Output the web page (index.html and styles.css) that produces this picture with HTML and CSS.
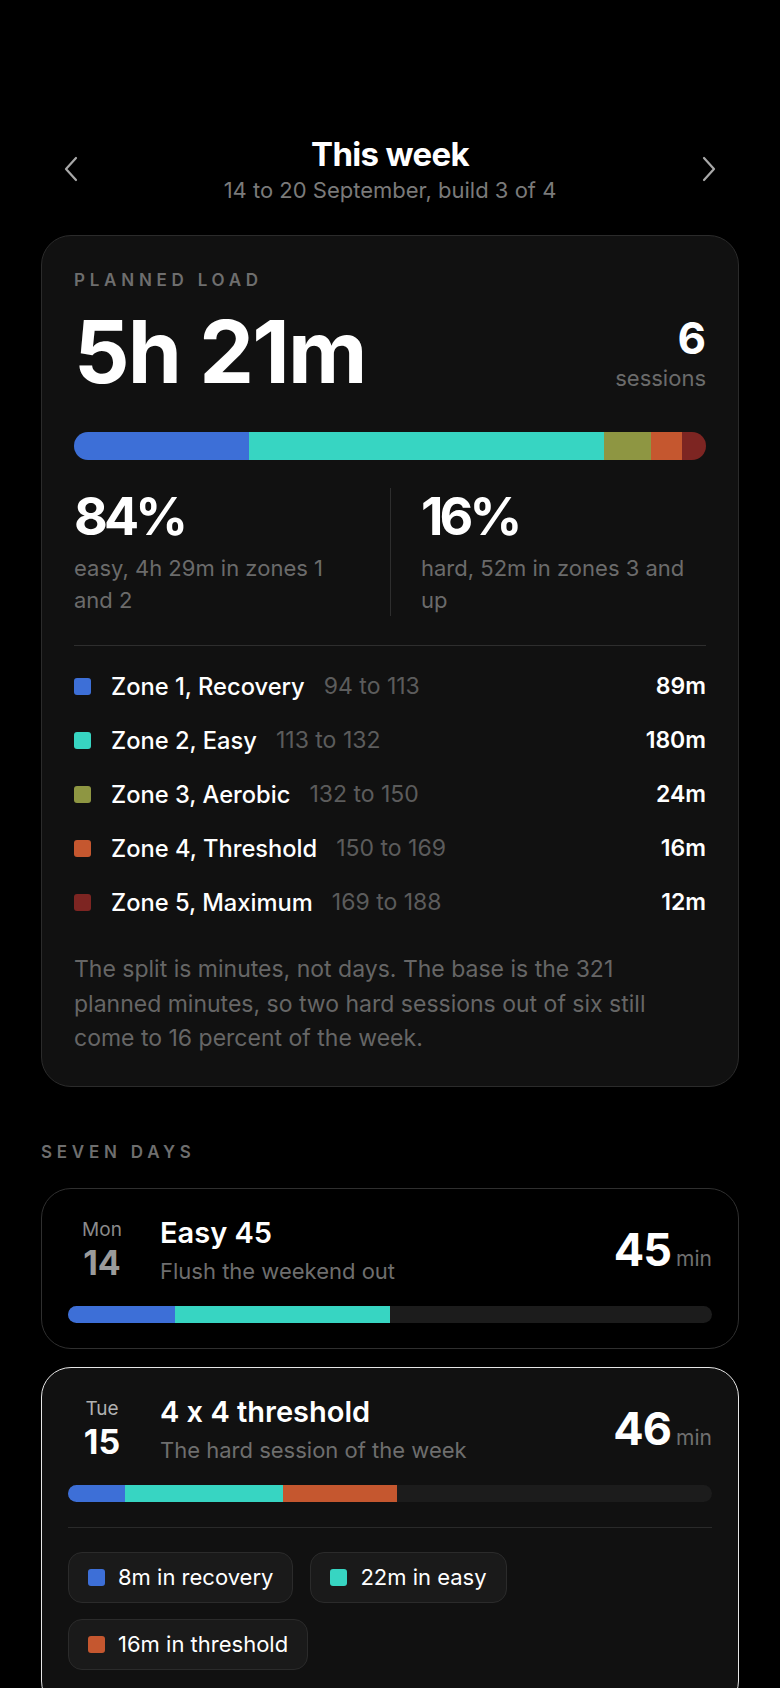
FILE: index.html
```html
<!DOCTYPE html>
<html lang="en">
<head>
    <meta charset="utf-8">
    <title>This week</title>
    <meta name="viewport" content="width=device-width, initial-scale=1">
    <link rel="stylesheet" href="styles.css">
</head>
<body>
    <main class="page">
        <header class="week-head">
            <button class="nav-btn" aria-label="Previous week">
                <svg width="14" height="26" viewBox="0 0 14 26"><polyline points="12,2 2,13 12,24"/></svg>
            </button>
            <div class="week-title">
                <h1>This week</h1>
                <p class="week-sub">14 to 20 September, build 3 of 4</p>
            </div>
            <button class="nav-btn" aria-label="Next week">
                <svg width="14" height="26" viewBox="0 0 14 26"><polyline points="2,2 12,13 2,24"/></svg>
            </button>
        </header>

        <section class="load-card">
            <div class="eyebrow">Planned load</div>
            <div class="total-row">
                <div class="total">5h 21m</div>
                <div class="sessions">
                    <span class="sessions-num">6</span>
                    <span class="sessions-label">sessions</span>
                </div>
            </div>
            <div class="zone-bar">
                <span class="seg z1" style="width:27.73%"></span>
                <span class="seg z2" style="width:56.07%"></span>
                <span class="seg z3" style="width:7.48%"></span>
                <span class="seg z4" style="width:4.98%"></span>
                <span class="seg z5" style="width:3.74%"></span>
            </div>
            <div class="split">
                <div class="split-col">
                    <div class="split-pct">84%</div>
                    <p class="split-desc">easy, 4h 29m in zones 1 and 2</p>
                </div>
                <div class="split-col hard">
                    <div class="split-pct">16%</div>
                    <p class="split-desc">hard, 52m in zones 3 and up</p>
                </div>
            </div>
            <ul class="zones">
                <li class="zone"><span class="swatch z1"></span><span class="zone-name">Zone 1, Recovery</span><span class="zone-range">94 to 113</span><span class="zone-min">89m</span></li>
                <li class="zone"><span class="swatch z2"></span><span class="zone-name">Zone 2, Easy</span><span class="zone-range">113 to 132</span><span class="zone-min">180m</span></li>
                <li class="zone"><span class="swatch z3"></span><span class="zone-name">Zone 3, Aerobic</span><span class="zone-range">132 to 150</span><span class="zone-min">24m</span></li>
                <li class="zone"><span class="swatch z4"></span><span class="zone-name">Zone 4, Threshold</span><span class="zone-range">150 to 169</span><span class="zone-min">16m</span></li>
                <li class="zone"><span class="swatch z5"></span><span class="zone-name">Zone 5, Maximum</span><span class="zone-range">169 to 188</span><span class="zone-min">12m</span></li>
            </ul>
            <p class="note">The split is minutes, not days. The base is the 321 planned minutes, so two hard sessions out of six still come to 16 percent of the week.</p>
        </section>

        <h2 class="eyebrow days-title">Seven days</h2>
        <div class="days">
            <article class="day past">
                <div class="day-top">
                    <div class="day-date"><span class="dow">Mon</span><span class="dom">14</span></div>
                    <div class="day-info">
                        <div class="day-name">Easy 45</div>
                        <div class="day-sub">Flush the weekend out</div>
                    </div>
                    <div class="dur"><span class="dur-num">45</span><span class="dur-unit">min</span></div>
                </div>
                <div class="day-bar">
                    <span class="seg z1" style="width:16.67%"></span>
                    <span class="seg z2" style="width:33.33%"></span>
                </div>
            </article>

            <article class="day open">
                <div class="day-top">
                    <div class="day-date"><span class="dow">Tue</span><span class="dom">15</span></div>
                    <div class="day-info">
                        <div class="day-name">4 x 4 threshold</div>
                        <div class="day-sub">The hard session of the week</div>
                    </div>
                    <div class="dur"><span class="dur-num">46</span><span class="dur-unit">min</span></div>
                </div>
                <div class="day-bar">
                    <span class="seg z1" style="width:8.89%"></span>
                    <span class="seg z2" style="width:24.44%"></span>
                    <span class="seg z4" style="width:17.78%"></span>
                </div>
                <div class="chips">
                    <span class="chip"><span class="swatch z1"></span>8m in recovery</span>
                    <span class="chip"><span class="swatch z2"></span>22m in easy</span>
                    <span class="chip"><span class="swatch z4"></span>16m in threshold</span>
                </div>
            </article>
        </div>
    </main>
</body>
</html>
```

FILE: styles.css
```css
body {
    margin: 0;
    background: #000;
    color: #fff;
    font-family: 'Inter', 'Noto Sans', sans-serif;
    font-feature-settings: "calt" 0;
}
.page {
    padding: 135px 41px 0;
}

/* header */
.week-head {
    display: flex;
    align-items: center;
    justify-content: space-between;
    padding: 0 18px;
}
.nav-btn {
    width: 24px;
    height: 30px;
    padding: 0;
    background: none;
    border: none;
    display: flex;
    align-items: center;
    justify-content: center;
    cursor: pointer;
}
.nav-btn polyline {
    fill: none;
    stroke: #a8a8a8;
    stroke-width: 2.2;
    stroke-linecap: round;
    stroke-linejoin: round;
}
.week-title {
    text-align: center;
}
.week-title h1 {
    margin: 0;
    font-size: 33px;
    line-height: 38px;
    font-weight: 700;
    letter-spacing: -0.02em;
}
.week-sub {
    margin: 4px 0 0;
    font-size: 22px;
    line-height: 26px;
    color: #7a7a7a;
}

/* planned load card */
.load-card {
    margin-top: 32px;
    background: #111;
    border: 1px solid #2b2b2b;
    border-radius: 30px;
    padding: 34px 32px 30px;
}
.eyebrow {
    margin: 0;
    font-size: 17px;
    line-height: 20px;
    font-weight: 600;
    letter-spacing: 0.28em;
    text-transform: uppercase;
    color: #6e6e6e;
}
.total-row {
    margin-top: 18px;
    display: flex;
    justify-content: space-between;
    align-items: flex-start;
}
.total {
    font-size: 87px;
    line-height: 87px;
    font-weight: 700;
    letter-spacing: -0.02em;
}
.sessions {
    margin-top: 8px;
    display: flex;
    flex-direction: column;
    align-items: flex-end;
}
.sessions-num {
    font-size: 44px;
    line-height: 44px;
    font-weight: 700;
}
.sessions-label {
    margin-top: 5px;
    font-size: 22px;
    line-height: 26px;
    color: #6b6b6b;
}
.zone-bar {
    margin-top: 37px;
    height: 28px;
    border-radius: 14px;
    overflow: hidden;
    display: flex;
}
.seg {
    display: block;
    height: 100%;
}
.z1 { background: #3d6fd7; }
.z2 { background: #37d5c2; }
.z3 { background: #8e9642; }
.z4 { background: #c5572f; }
.z5 { background: #7d2522; }

.split {
    margin-top: 28px;
    display: grid;
    grid-template-columns: 1fr 1fr;
}
.split-col {
    padding-right: 30px;
}
.split-col.hard {
    border-left: 1px solid #2e2e2e;
    padding: 0 0 0 30px;
}
.split-pct {
    margin-top: 3px;
    font-size: 52px;
    line-height: 52px;
    font-weight: 700;
    letter-spacing: -0.075em;
}
.split-desc {
    margin: 9px 0 0;
    font-size: 22px;
    line-height: 32px;
    color: #6b6b6b;
}

.zones {
    list-style: none;
    margin: 29px 0 0;
    padding: 13px 0 0;
    border-top: 1px solid #2e2e2e;
}
.zone {
    height: 54px;
    display: flex;
    align-items: center;
}
.swatch {
    width: 17px;
    height: 17px;
    border-radius: 3px;
    flex-shrink: 0;
}
.zone .swatch {
    margin-right: 20px;
}
.zone-name {
    font-size: 23.7px;
    font-weight: 500;
}
.zone-range {
    margin-left: 19px;
    font-size: 23px;
    color: #5c5c5c;
}
.zone-min {
    margin-left: auto;
    font-size: 23px;
    font-weight: 600;
}
.note {
    margin: 23px 0 0;
    font-size: 23px;
    line-height: 34.5px;
    color: #666;
}

/* seven days */
.days-title {
    margin: 55px 0 26px;
}
.days {
    display: flex;
    flex-direction: column;
    gap: 18px;
}
.day {
    background: #000;
    border: 1px solid #2f2f2f;
    border-radius: 30px;
    padding: 27px 26px 25px;
}
.day.open {
    background: #111;
    border: 1.5px solid #e6e6e6;
    padding-bottom: 40px;
}
.day-top {
    display: flex;
    align-items: flex-start;
}
.day-date {
    width: 68px;
    padding-top: 2px;
    display: flex;
    flex-direction: column;
    align-items: center;
}
.dow {
    font-size: 19px;
    line-height: 24px;
    color: #8a8a8a;
}
.dom {
    margin-top: 2px;
    font-size: 34px;
    line-height: 38px;
    font-weight: 700;
    color: #9b9b9b;
}
.open .dow { color: #b0b0b0; }
.open .dom { color: #fff; }
.day-info {
    flex: 1;
    margin-left: 24px;
}
.day-name {
    font-size: 29px;
    line-height: 34px;
    font-weight: 600;
}
.day-sub {
    margin-top: 7px;
    font-size: 22px;
    line-height: 28px;
    color: #6e6e6e;
}
.dur {
    align-self: center;
    display: flex;
    align-items: baseline;
    gap: 5px;
}
.dur-num {
    font-size: 45px;
    line-height: 44px;
    font-weight: 700;
    letter-spacing: -0.02em;
}
.dur-unit {
    font-size: 21px;
    color: #6f6f6f;
}
.day-bar {
    margin-top: 21px;
    height: 17px;
    border-radius: 9px;
    background: #1c1c1c;
    overflow: hidden;
    display: flex;
}
.chips {
    margin-top: 25px;
    padding-top: 24px;
    border-top: 1px solid #2a2a2a;
    display: flex;
    flex-wrap: wrap;
    gap: 16px 17px;
}
.chip {
    height: 51px;
    box-sizing: border-box;
    padding: 0 19px;
    display: flex;
    align-items: center;
    gap: 13px;
    background: #1a1a1a;
    border: 1px solid #2b2b2b;
    border-radius: 14px;
    font-size: 22px;
}
```
